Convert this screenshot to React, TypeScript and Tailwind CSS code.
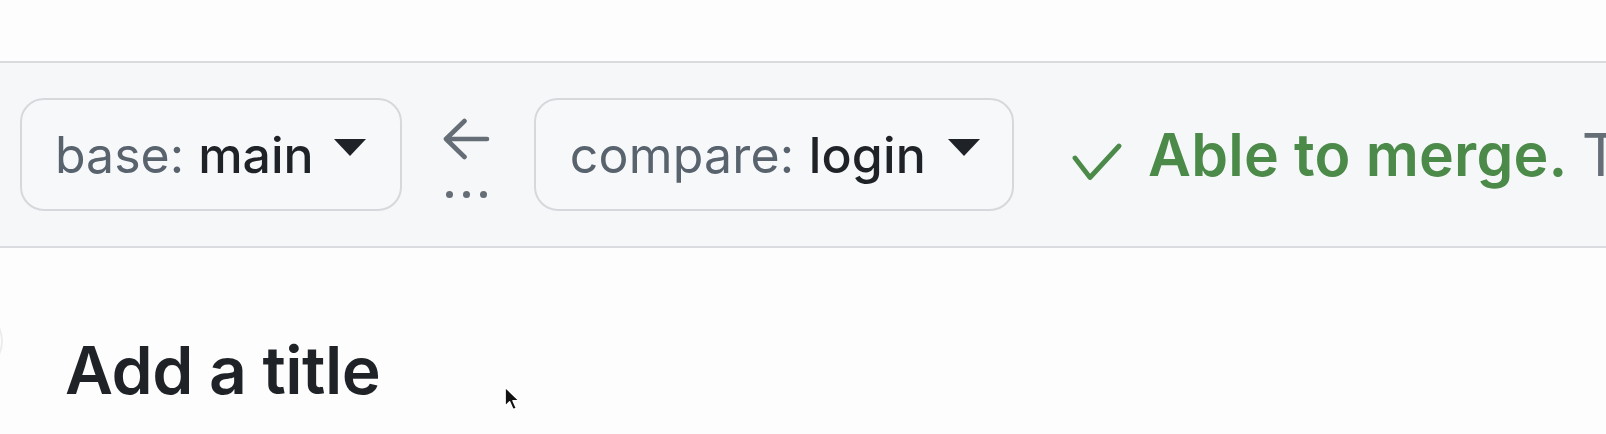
import React from "react";

function Caret() {
  return (
    <svg width="32" height="17" viewBox="0 0 32 17" className="shrink-0 mb-[14px]">
      <path d="M0 0 L32 0 L16 17 Z" fill="#1f2328" />
    </svg>
  );
}

export default function App() {
  return (
    <div
      className="relative w-[1606px] h-[434px] overflow-hidden bg-[#fdfdfd]"
      style={{ fontFamily: "Inter, 'Noto Sans', sans-serif" }}
    >
      <div className="h-[61px]" />
      <div className="h-[187px] border-y-2 border-[#d9dbde] bg-[#f6f7f9] flex items-center pl-[20px] whitespace-nowrap">
        <div className="shrink-0 h-[113px] rounded-[24px] border-2 border-[#d6d8dc] bg-[#f7f8fa] flex items-center pl-[33px] pr-[34px] gap-[20px]">
          <span className="whitespace-nowrap text-[50px] leading-none tracking-[0px] text-[#59636e]">
            base: <span className="font-medium text-[#1f2328]">main</span>
          </span>
          <Caret />
        </div>
        <div className="shrink-0 ml-[41px] flex flex-col items-center gap-[31px] mt-[6px]">
          <svg width="47" height="42" viewBox="0 0 47 42" fill="none">
            <path
              d="M3 21 L21.5 3 M3 21 L21.5 39 M3 21 L44 21"
              stroke="#656d76"
              strokeWidth="4.6"
              strokeLinecap="round"
              strokeLinejoin="round"
            />
          </svg>
          <div className="flex gap-[10px]">
            <div className="w-[7px] h-[7px] rounded-full bg-[#656d76]" />
            <div className="w-[7px] h-[7px] rounded-full bg-[#656d76]" />
            <div className="w-[7px] h-[7px] rounded-full bg-[#656d76]" />
          </div>
        </div>
        <div className="shrink-0 ml-[44px] h-[113px] rounded-[24px] border-2 border-[#d6d8dc] bg-[#f7f8fa] flex items-center pl-[34px] pr-[32px] gap-[22px]">
          <span className="whitespace-nowrap text-[50px] leading-none tracking-[0.2px] text-[#59636e]">
            compare: <span className="font-medium text-[#1f2328]">login</span>
          </span>
          <Caret />
        </div>
        <div className="shrink-0 ml-[58px] flex items-center whitespace-nowrap">
          <svg width="50" height="40" viewBox="0 0 50 40" fill="none" className="shrink-0 mt-[14px]">
            <path
              d="M3 16 L18 35.5 L47 4"
              stroke="#4c8a4a"
              strokeWidth="4.8"
              strokeLinecap="round"
              strokeLinejoin="round"
            />
          </svg>
          <span className="ml-[26px] text-[59px] leading-none font-semibold tracking-[0.2px] text-[#4c8a4a]">
            Able to merge.
          </span>
          <span className="ml-[14px] text-[59px] leading-none text-[#656d76]">
            These branches can be automatically merged.
          </span>
        </div>
      </div>
      <div className="flex items-center h-[186px]">
        <div className="w-[64px] h-[64px] rounded-full border-2 border-[#ececec] -ml-[61px] shrink-0" />
        <h2 className="ml-[62px] mt-[58px] text-[66px] leading-none font-semibold tracking-[-0.5px] text-[#1f2328] whitespace-nowrap">
          Add a title
        </h2>
      </div>
      <svg
        className="absolute left-[504px] top-[386px]"
        width="18"
        height="27"
        viewBox="0 0 16 24"
      >
        <path
          d="M1 1 L1 18 L5 14 L8 21 L11 19.8 L8 13 L13.5 13 Z"
          fill="#111"
          stroke="#fff"
          strokeWidth="1.3"
          strokeLinejoin="round"
        />
      </svg>
    </div>
  );
}
